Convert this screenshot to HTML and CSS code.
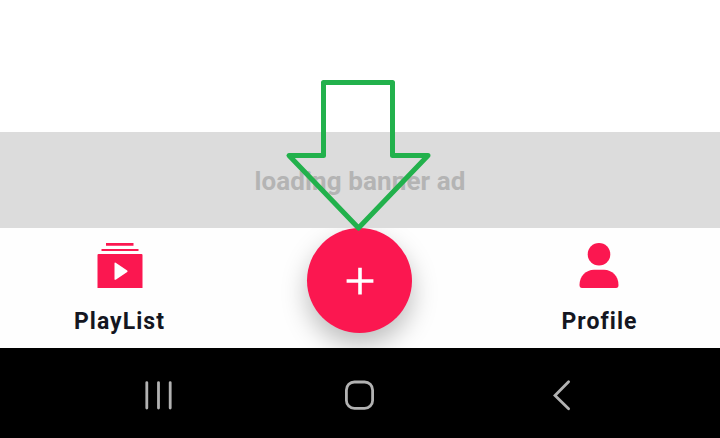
FILE: index.html
```html
<!DOCTYPE html>
<html lang="en">
<head>
<meta charset="utf-8">
<title>PlayList</title>
<link rel="stylesheet" href="styles.css">
</head>
<body>
<main class="screen">
  <section class="content"></section>
  <section class="banner"><span class="banner-text">loading banner ad</span></section>
  <nav class="tabs">
    <a class="tab">
      <svg class="tab-icon list" width="46" height="46" viewBox="0 0 46 46"><path d="M9 1h27.5v2.8H9zM4.5 7h37v2h-37z"/><path fill-rule="evenodd" d="M1.5 12h43a1 1 0 0 1 1 1v33H.5V13a1 1 0 0 1 1-1zM17.5 21.2v16q0 1 1.2.5l11.5-7.6q.8-.8 0-1.6l-11.5-7.8q-1.2-.5-1.2.5z"/></svg>
      <span class="tab-label">PlayList</span>
    </a>
    <button class="fab" aria-label="Add">
      <svg width="28" height="28" viewBox="0 0 28 28"><path d="M14 .8v26.6M.6 14h26.8"/></svg>
    </button>
    <a class="tab">
      <svg class="tab-icon person" width="40" height="46" viewBox="0 0 40 46"><circle cx="20" cy="12.3" r="11.3"/><path d="M.5 43C.5 34 7 27.7 15 27.7h10C33 27.7 39.5 34 39.5 43Q39.5 46 37 46H3Q.5 46 .5 43z"/></svg>
      <span class="tab-label">Profile</span>
    </a>
  </nav>
  <footer class="system">
    <svg class="system-icon" width="30" height="32" viewBox="0 0 30 32"><path d="M3.8 3.6v25.4M15.5 3.6v25.4M27.2 3.6v25.4"/></svg>
    <svg class="system-icon" width="32" height="32" viewBox="0 0 32 32"><rect x="3.4" y="3" width="26.2" height="26.4" rx="8"/></svg>
    <svg class="system-icon back" width="24" height="32" viewBox="0 0 24 32"><path d="M18.6 2.7 5 16.4l13.6 13.4"/></svg>
  </footer>
  <svg class="pointer" width="150" height="156" viewBox="284 76 150 156"><path d="M323.5 82.5h69v73H428L358.5 228 289 155.5h34.5z"/></svg>
</main>
</body>
</html>
```
FILE: styles.css
```css
body {
  margin: 0;
  font-family: Roboto, "Liberation Sans", sans-serif;
}
.screen {
  position: relative;
  display: grid;
  grid-template-columns: 720px;
  grid-template-rows: 132px 96px 120px 90px;
  width: 720px;
  height: 438px;
  overflow: hidden;
  background: #fff;
}
.banner {
  display: flex;
  align-items: center;
  justify-content: center;
  padding-top: 2px;
  background: #dcdcdc;
}
.banner-text {
  font-size: 26px;
  font-weight: 700;
  letter-spacing: 0.12px;
  color: #b4b4b4;
}
.tabs {
  display: grid;
  grid-template-columns: repeat(3, 1fr);
  justify-items: center;
  overflow: hidden;
  background: #fefefe;
}
.tab {
  display: flex;
  flex-direction: column;
  align-items: center;
  padding-top: 14px;
}
.tab-icon {
  fill: #fb1750;
}
.person {
  margin-right: 2px;
}
.tab-label {
  margin-top: 20px;
  margin-right: 1px;
  font-size: 23px;
  line-height: 28px;
  font-weight: 700;
  letter-spacing: 1.05px;
  color: #141621;
}
.fab {
  display: grid;
  place-items: center;
  width: 105px;
  height: 105px;
  margin: 0 1px 0 0;
  padding: 0;
  border: 0;
  border-radius: 50%;
  background: #fb1750;
  box-shadow: 0 12px 26px rgba(0, 0, 0, 0.26);
}
.fab svg {
  fill: none;
  stroke: #fff;
  stroke-width: 3.6;
}
.system {
  display: grid;
  grid-template-columns: 316px 86px 318px;
  place-items: center;
  padding-top: 4px;
  background: #000;
}
.system-icon {
  fill: none;
  stroke: #b2b2b2;
  stroke-width: 2.8;
  stroke-linecap: round;
}
.back {
  margin-left: 2px;
}
.pointer {
  position: absolute;
  left: 284px;
  top: 76px;
  fill: none;
  stroke: #22b14c;
  stroke-width: 5;
  stroke-linejoin: round;
}
```
